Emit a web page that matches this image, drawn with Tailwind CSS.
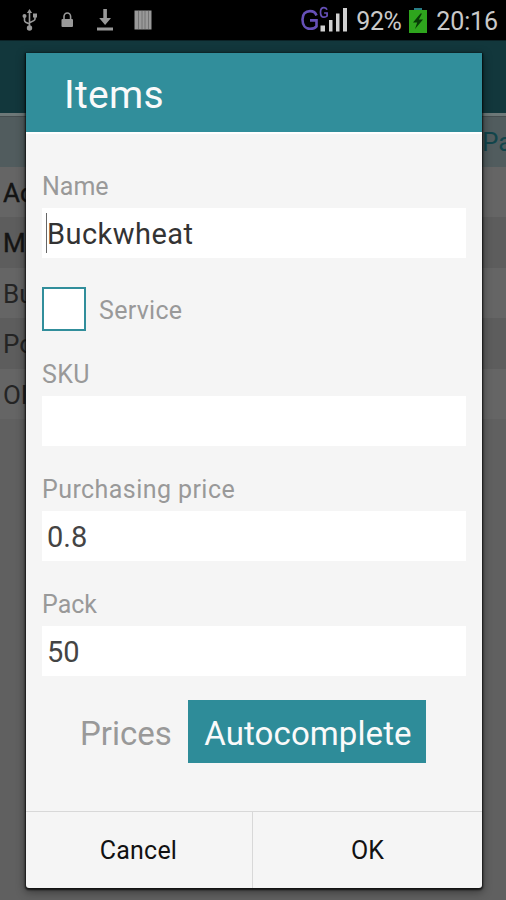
<!DOCTYPE html>
<html lang="en">
<head>
<meta charset="utf-8">
<title>Items</title>
<script src="https://cdn.jsdelivr.net/npm/@tailwindcss/browser@4"></script>
</head>
<body class="font-[Roboto,sans-serif]">
<div class="relative w-[506px] h-[900px] overflow-hidden bg-[#606060]">
  <header class="flex h-10 items-center justify-between bg-black pl-[22px] pr-2 text-[25px] text-[#c9c9c9]">
    <div class="flex items-center text-[#999]">
      <svg class="w-4 h-[22px]" viewBox="0 0 16 22" fill="none" stroke="currentColor" stroke-width="1.6"><path d="M7.5 3v16M2.5 8v3.5q0 1 1.2 1.7L7.5 15M13 7v3q0 1-1.2 1.6L7.5 13.7"/><path fill="currentColor" stroke="none" d="M7.5 0l2.6 4H4.900zM11 4.500h4v4h-4z"/><circle cx="2.500" cy="7" r="2" fill="currentColor" stroke="none"/><circle cx="7.500" cy="19" r="2.700" fill="currentColor" stroke="none"/></svg>
      <svg class="ml-[23px] w-[13px] h-4" viewBox="0 0 13 16"><path d="M3 8V4.500a3.300 3.500 0 0 1 6.600 0V8" fill="none" stroke="currentColor" stroke-width="1.600"/><rect x=".5" y="7" width="11.500" height="8" rx="1" fill="currentColor"/></svg>
      <svg class="ml-[23px] w-4 h-[22px]" viewBox="0 0 16 22" fill="currentColor"><path d="M6.300 0h3.600v9h4.100l-5.900 7-5.900-7h4.100zM0 18.500h16v3H0z"/></svg>
      <svg class="ml-[21px] w-[18px] h-5" viewBox="0 0 18 20"><path d="M.5.500h17v19H.5z" fill="#999"/><path d="M4.500 1v18M8 1v18M11 1v18M14.500 1v18" stroke="#727272"/></svg>
    </div>
    <div class="flex items-center">
      <svg class="w-[49px] h-7 shrink-0" viewBox="0 0 49 28"><g fill="none" stroke="#6650b8"><path d="M16.500 9.500C15.500 6.300 13.500 5.100 10 5.100 5.500 5.100 2.500 8 2.500 13.500c0 5.500 2.800 9.300 7.500 9.300 3 0 5.200-.8 6.500-2.400v-6H10" stroke-width="2.600"/><path d="M27 3.800C26.500 2.300 25.500 1.700 24 1.700 21.500 1.700 20.500 3.700 20.500 6.200s1 5 3.500 5c1.500 0 2.400-.5 3.100-1.200V7h-3" stroke-width="1.700"/></g><path d="M20.500 19.500h4.500v6h-4.500zM29 14h3.500v11.500h-3.500zM36 7.500h3.500v18h-3.500zM43 2h4v23.500h-4z" fill="#d0d0d0"/></svg>
      <span class="ml-[7px] w-[48px] mt-[3px] leading-7 tracking-[-0.4px]">92%</span>
      <svg class="ml-[5px] w-[18px] h-[25px] shrink-0" viewBox="0 0 18 25"><path d="M5 0h8v3H5z" fill="#287d86"/><path d="M0 2h18v23H0z" fill="#2ea51d"/><path d="M11.500 5.500L4 14.500h4.200L6 21l8-9.500H9.800l3.200-6z" fill="#073b06"/></svg>
      <span class="ml-[9px] mt-[3px] leading-7 tracking-[-0.1px]">20:16</span>
    </div>
  </header>
  <div class="h-[73px] border-t border-[#0b2226] bg-[#12373c]"></div>
  <div class="h-[3px] bg-[#6d7878]"></div>
  <div class="flex h-[51px] justify-end bg-[#515c5e] border-t border-[#454d4f] text-[26px] leading-[50px] text-[#12454b]"><span class="w-[24px] whitespace-nowrap">Pa</span></div>
  <ul class="text-[26px] leading-[53px] text-[#141414]">
    <li class="h-[50px] w-full bg-[#656565] pl-[3px]"><span class="block w-[23px] overflow-hidden [-webkit-text-stroke:0.4px_#141414]">Ac</span></li>
    <li class="h-[51px] w-full bg-[#5d5d5d] pl-[3px]"><span class="block w-[23px] overflow-hidden [-webkit-text-stroke:0.4px_#141414]">M</span></li>
    <li class="h-[50px] w-full bg-[#656565] pl-[3px] text-[#242424]"><span class="block w-[23px] overflow-hidden">Bu</span></li>
    <li class="h-[51px] w-full bg-[#5d5d5d] pl-[3px] text-[#242424]"><span class="block w-[23px] overflow-hidden">Po</span></li>
    <li class="h-[50px] w-full bg-[#656565] pl-[3px] text-[#242424]"><span class="block w-[23px] overflow-hidden">Ol</span></li>
  </ul>

  <section class="absolute left-[26px] top-[53px] flex h-[835px] w-[456px] flex-col overflow-hidden rounded-b-[3px] bg-[#f5f5f5] shadow-[0_1px_2px_1px_rgba(0,0,0,0.75),0_3px_10px_1px_rgba(0,0,0,0.4)]">
    <h1 class="h-[79px] shrink-0 bg-[#318e9b] pl-[38px] text-[39px] leading-[84px] tracking-[0.3px] text-[#fafafa]">Items</h1>
    <div class="flex-1 border-t-2 border-white px-4 pt-[37px] text-[25px] leading-[32px] text-[#999]">
      <label class="block">Name</label>
      <div class="mt-[5px] flex h-[50px] items-center bg-white pl-[4px] text-[29px] text-[#333]"><span class="h-[40px] w-px bg-[#666]"></span><span class="mt-[2px] tracking-[0.45px]">Buckwheat</span></div>
      <div class="mt-[29px] flex h-[44px] items-center"><span class="size-[44px] border-2 border-[#318e9b] bg-white"></span><span class="ml-[13px] mt-[3px] tracking-[0.3px]">Service</span></div>
      <label class="mt-[28px] block tracking-[0.4px]">SKU</label>
      <div class="mt-[5px] h-[50px] bg-white"></div>
      <label class="mt-[28px] block tracking-[0.43px]">Purchasing price</label>
      <div class="mt-[5px] flex h-[50px] items-center bg-white pl-[5px] text-[29px] text-[#444]"><span class="mt-[2px]">0.8</span></div>
      <label class="mt-[28px] block">Pack</label>
      <div class="mt-[5px] flex h-[50px] items-center bg-white pl-[5px] text-[29px] text-[#444]"><span class="mt-[2px]">50</span></div>
      <div class="mt-[24px] flex h-[63px] pl-[38px] text-[33px] leading-[67px]"><span class="w-[108px]">Prices</span><button class="w-[238px] bg-[#2e8c99] pl-[2px] tracking-[0.1px] text-[#fafafa]">Autocomplete</button></div>
    </div>
    <footer class="flex h-[77px] shrink-0 border-t border-[#d8d8d8] text-[25px] leading-[78px] text-[#111]">
      <button class="w-[227px] border-r border-[#d8d8d8] pr-[1px] tracking-[0.2px]">Cancel</button>
      <button class="flex-1">OK</button>
    </footer>
  </section>
</div>
</body>
</html>
